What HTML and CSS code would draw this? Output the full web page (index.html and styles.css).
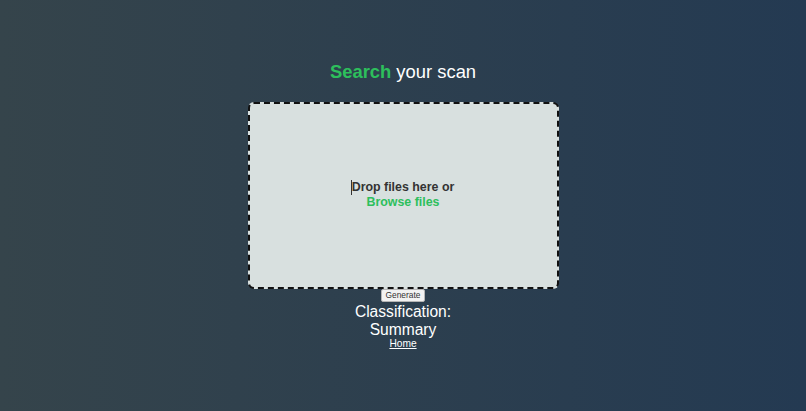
FILE: index.html
```html
<!DOCTYPE html>
<html>
<head>
<meta charset="utf-8">
<link rel="stylesheet" href="styles.css">
</head>
<body>
<main class="page">
  <h1 class="title"><span class="accent">Search</span> your scan</h1>
  <div class="dropzone">
    <p class="drop-text"><span class="caret"></span>Drop files here or</p>
    <p class="browse">Browse files</p>
  </div>
  <button class="generate">Generate</button>
  <div class="result">Classification:<br>Summary</div>
  <a class="home" href="#">Home</a>
</main>
</body>
</html>
```

FILE: styles.css
```css
html, body {
  margin: 0;
  height: 100%;
}
body {
  background: linear-gradient(90deg, #35444b 0%, #243a52 100%);
  font-family: "Liberation Sans", Arial, sans-serif;
  color: #ffffff;
}
.page {
  display: flex;
  flex-direction: column;
  align-items: center;
  padding-top: 61px;
}
.title {
  margin: 0;
  font-size: 18.4px;
  font-weight: normal;
  line-height: 22px;
  color: #ffffff;
}
.accent {
  color: #2dbf5c;
  font-weight: bold;
}
.dropzone {
  margin-top: 19px;
  width: 307px;
  height: 183px;
  box-sizing: content-box;
  background: #d8e0df;
  border: 2px dashed #111111;
  border-radius: 6px;
  display: flex;
  flex-direction: column;
  align-items: center;
  justify-content: center;
}
.drop-text, .browse {
  margin: 0;
  font-size: 12.4px;
  font-weight: bold;
  line-height: 15px;
  position: relative;
  top: -1px;
}
.drop-text {
  color: #333333;
}
.caret {
  position: absolute;
  left: -1px;
  top: 0;
  width: 1px;
  height: 15px;
  background: #333333;
}
.browse {
  color: #2dbf5c;
}
.generate {
  margin-top: 0;
  font-family: "Liberation Sans", Arial, sans-serif;
  font-size: 8.4px;
  padding: 1px 4px;
  background: #f2f2f2;
  border: 1px solid #b5b5b5;
  border-radius: 2px;
  color: #333;
  line-height: 9px;
}
.result {
  text-align: center;
  font-size: 15.6px;
  line-height: 18px;
  margin-top: 1px;
}
.home {
  color: #ffffff;
  font-size: 10.2px;
  line-height: 12px;
  text-decoration: underline;
  margin-top: -1px;
}
```
